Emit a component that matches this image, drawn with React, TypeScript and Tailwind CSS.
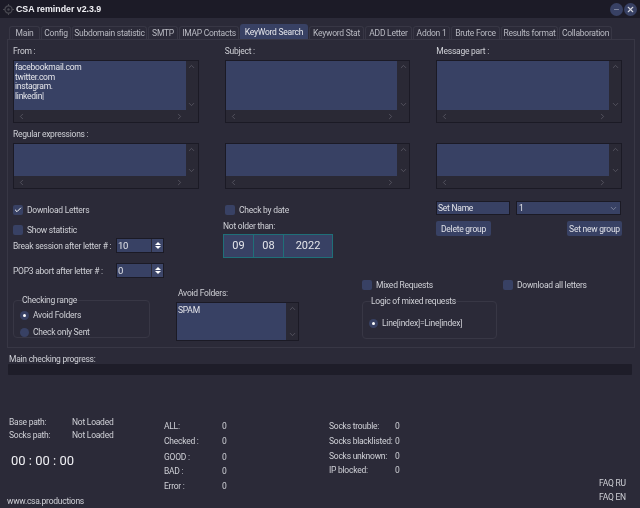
import { ChevronDown, ChevronLeft, ChevronRight, ChevronUp, Check, Minus, X } from "lucide-react";
import type { ReactNode } from "react";

const tabs = [
  { name: "Main", w: "w-[31px]" },
  { name: "Config", w: "w-[30px]" },
  { name: "Subdomain statistic", w: "w-[75px]" },
  { name: "SMTP", w: "w-[30px]" },
  { name: "IMAP Contacts", w: "w-[60px]" },
  { name: "KeyWord Search", w: "w-[68px]", active: true },
  { name: "Keyword Stat", w: "w-[55px]" },
  { name: "ADD Letter", w: "w-[47px]" },
  { name: "Addon 1", w: "w-[37px]" },
  { name: "Brute Force", w: "w-[49px]" },
  { name: "Results format", w: "w-[57px]" },
  { name: "Collaboration", w: "w-[53px]" },
];

function ListBox({ h, lines = [], className = "" }: { h: string; lines?: string[]; className?: string }) {
  return (
    <div className={`flex flex-col border border-[#1b1a25] bg-[#2a2935] ${className}`}>
      <div className="flex">
        <div className={`flex-1 bg-[#384164] px-[1px] pt-[2px] leading-[9.5px] text-[#e4e5ea] ${h}`}>
          {lines.map((l) => (
            <div key={l}>{l}</div>
          ))}
        </div>
        <div className="flex w-[12px] flex-col items-center justify-between py-[1px] text-[#5d5c68]">
          <ChevronUp size={9} strokeWidth={2} />
          <ChevronDown size={9} strokeWidth={2} />
        </div>
      </div>
      <div className="flex h-[12px] items-center justify-between pl-[3px] pr-[14px] text-[#5d5c68]">
        <ChevronLeft size={9} strokeWidth={2} />
        <ChevronRight size={9} strokeWidth={2} />
      </div>
    </div>
  );
}

function CheckRow({ label, checked, className = "" }: { label: string; checked?: boolean; className?: string }) {
  return (
    <div className={`flex items-center gap-[4px] whitespace-nowrap ${className}`}>
      <span className="flex h-[10px] w-[10px] items-center justify-center rounded-[2px] bg-[#384164] text-white">
        {checked && <Check size={8} strokeWidth={3} />}
      </span>
      <span>{label}</span>
    </div>
  );
}

function RadioRow({ label, on, className = "" }: { label: string; on?: boolean; className?: string }) {
  return (
    <div className={`flex items-center gap-[4px] whitespace-nowrap ${className}`}>
      <span className="flex h-[9px] w-[9px] items-center justify-center rounded-full bg-[#384164]">
        {on && <span className="h-[3px] w-[3px] rounded-full bg-white" />}
      </span>
      <span>{label}</span>
    </div>
  );
}

function Spin({ value }: { value: string }) {
  return (
    <div className="flex h-[15px] w-[48px] border border-[#1b1a25] bg-[#384164]">
      <span className="flex-1 pl-[1px] text-[9.5px] leading-[13px] text-[#e4e5ea]">{value}</span>
      <span className="flex w-[12px] flex-col items-center justify-center gap-[1px] border-l border-[#2a2935] bg-[#3d4669]">
        <span className="h-0 w-0 border-x-[3px] border-b-[3px] border-x-transparent border-b-white" />
        <span className="h-0 w-0 border-x-[3px] border-t-[3px] border-x-transparent border-t-white" />
      </span>
    </div>
  );
}

function Group({ title, className = "", children }: { title: string; className?: string; children: ReactNode }) {
  return (
    <fieldset className={`h-[42px] rounded-[4px] border border-[#383745] ${className}`}>
      <legend className="ml-[8px] leading-[9px]">{title}</legend>
      {children}
    </fieldset>
  );
}

function Btn({ children, className = "" }: { children: ReactNode; className?: string }) {
  return (
    <div className={`flex h-[15px] items-center justify-center rounded-[2px] bg-[#384164] whitespace-nowrap text-[#dfe0e6] ${className}`}>
      {children}
    </div>
  );
}

function Stat({ label, value, labelW, className = "" }: { label: string; value: string; labelW: string; className?: string }) {
  return (
    <div className={`flex whitespace-nowrap leading-[10px] ${className}`}>
      <span className={labelW}>{label}</span>
      <span>{value}</span>
    </div>
  );
}

export default function App() {
  return (
    <div className="h-[508px] w-[640px] overflow-hidden bg-[#2b2a38] font-['Roboto',sans-serif] text-[8.5px] leading-[12px] tracking-[-0.25px] text-[#cfd0d6] blur-[0.3px]">
      {/* title bar */}
      <div className="flex h-[18px] items-center bg-[#1c1b27] pl-[3px] pr-[3px]">
        <svg width="11" height="11" viewBox="0 0 11 11" className="text-[#4a4a52]">
          <circle cx="5.5" cy="5.5" r="3.6" fill="none" stroke="currentColor" strokeWidth="1.2" />
          <circle cx="5.5" cy="5.5" r="1.2" fill="currentColor" />
          <path d="M5.5 0v2M5.5 9v2M0 5.5h2M9 5.5h2" stroke="currentColor" strokeWidth="1" />
        </svg>
        <span className="ml-[2px] font-['Liberation_Sans',sans-serif] text-[8.8px] font-bold tracking-normal text-[#f0f0f4]">CSA reminder v2.3.9</span>
        <div className="ml-auto flex gap-[1px]">
          <span className="flex h-[13px] w-[13px] items-center justify-center rounded-full bg-[#384164] text-[#9aa0b4]">
            <Minus size={7} strokeWidth={2.5} />
          </span>
          <span className="flex h-[13px] w-[13px] items-center justify-center rounded-full bg-[#384164] text-[#d5d7de]">
            <X size={9} strokeWidth={3} />
          </span>
        </div>
      </div>

      {/* tabs */}
      <div className="mt-[6px] flex h-[15px] items-end gap-[1px] pl-[9px]">
        {tabs.map((t) => (
          <div
            key={t.name}
            className={`flex shrink-0 items-center justify-center whitespace-nowrap rounded-t-[3px] ${t.w} ${
              t.active
                ? "h-[15px] bg-[#384164] text-[#e6e7ec]"
                : "h-[13px] border border-b-0 border-[#383745] text-[#b9bac2]"
            }`}
          >
            {t.name}
          </div>
        ))}
      </div>

      {/* panel */}
      <div className="ml-[7px] h-[309px] w-[628px] border border-[#383745] pl-[5px]">
        <div className="grid w-[609px] grid-cols-3 gap-x-[26px]">
          <div>
            <div className="h-[20px] pt-[5px]">From :</div>
            <ListBox h="h-[49px]" lines={["facebookmail.com", "twitter.com", "instagram.", "linkedin|"]} />
          </div>
          <div>
            <div className="h-[20px] pt-[5px]">Subject :</div>
            <ListBox h="h-[49px]" />
          </div>
          <div>
            <div className="h-[20px] pt-[5px]">Message part :</div>
            <ListBox h="h-[49px]" />
          </div>
          <div className="col-span-3 h-[20px] pt-[5px]">Regular expressions :</div>
          <ListBox h="h-[32px]" />
          <ListBox h="h-[32px]" />
          <ListBox h="h-[32px]" />
        </div>

        {/* options */}
        <div className="mt-[12px] flex h-[86px]">
          <div className="w-[210px]">
            <CheckRow label="Download Letters" checked className="mt-[3px]" />
            <CheckRow label="Show statistic" className="mt-[8px]" />
            <div className="mt-[2px] flex items-center whitespace-nowrap">
              <span className="w-[103px]">Break session after letter # :</span>
              <Spin value="10" />
            </div>
            <div className="mt-[10px] flex items-center whitespace-nowrap">
              <span className="w-[103px]">POP3 abort after letter # :</span>
              <Spin value="0" />
            </div>
          </div>
          <div className="w-[213px]">
            <CheckRow label="Check by date" className="ml-[2px] mt-[3px]" />
            <div className="mt-[4px]">Not older than:</div>
            <div className="mt-[2px] flex h-[24px] w-[110px] border border-[#1f6f78] bg-[#384164] text-[11px] tracking-normal text-[#e4e5ea]">
              <span className="flex w-[30px] items-center justify-center border-r border-[#1f6f78]">09</span>
              <span className="flex w-[30px] items-center justify-center border-r border-[#1f6f78]">08</span>
              <span className="flex flex-1 items-center justify-center">2022</span>
            </div>
          </div>
          <div className="w-[186px]">
            <div className="flex gap-[6px]">
              <div className="h-[14px] w-[74px] border border-[#1b1a25] bg-[#384164] pl-[1px] leading-[12px] text-[#e4e5ea]">Set Name</div>
              <div className="flex h-[14px] w-[105px] items-center justify-between border border-[#1b1a25] bg-[#384164] pl-[2px] pr-[2px] text-[#e4e5ea]">
                1
                <ChevronDown size={9} className="text-[#8e93a8]" />
              </div>
            </div>
            <div className="mt-[6px] flex justify-between">
              <Btn className="w-[55px]">Delete group</Btn>
              <Btn className="w-[55px]">Set new group</Btn>
            </div>
          </div>
        </div>

        {/* group row */}
        <div className="flex h-[60px]">
          <div className="w-[140px] pt-[9px]">
            <Group title="Checking range" className="w-[137px]">
              <RadioRow label="Avoid Folders" on className="ml-[6px] mt-[4px]" />
              <RadioRow label="Check only Sent" className="ml-[6px] mt-[5px]" />
            </Group>
          </div>
          <div className="ml-[23px] w-[186px]">
            <div className="pl-[2px] pt-[1px] leading-[10px]">Avoid Folders:</div>
            <div className="mt-[4px] flex h-[39px] w-[123px] border border-[#1b1a25] bg-[#2a2935]">
              <div className="flex-1 bg-[#384164] pl-[1px] pt-[1px] text-[#e4e5ea]">SPAM</div>
              <div className="flex w-[12px] flex-col items-center justify-between py-[1px] text-[#5d5c68]">
                <ChevronUp size={9} strokeWidth={2} />
                <ChevronDown size={9} strokeWidth={2} />
              </div>
            </div>
          </div>
          <div className="w-[141px]">
            <CheckRow label="Mixed Requests" className="mt-[-8px]" />
            <Group title="Logic of mixed requests" className="mt-[6px] w-[135px]">
              <RadioRow label="Line[index]=Line[index]" on className="ml-[6px] mt-[11px]" />
            </Group>
          </div>
          <CheckRow label="Download all letters" className="mt-[-7px] h-[10px]" />
        </div>
      </div>

      {/* progress */}
      <div className="ml-[9px] mt-[6px] leading-[10px]">Main checking progress:</div>
      <div className="ml-[8px] h-[11px] w-[624px] rounded-[1px] bg-[#1e1d29]" />

      {/* bottom stats */}
      <div className="mt-[42px] flex h-[90px]">
        <div className="w-[164px] pl-[9px]">
          <Stat label="Base path:" value="Not Loaded" labelW="w-[63px]" />
          <Stat label="Socks path:" value="Not Loaded" labelW="w-[63px]" className="mt-[3px]" />
          <div className="ml-[2px] mt-[13px] text-[13px] leading-[16px] tracking-normal text-[#f0f0f4]">00 : 00 : 00</div>
          <div className="ml-[-2px] mt-[27px] leading-[10px]">www.csa.productions</div>
        </div>
        <div className="w-[165px] pt-[4px]">
          <Stat label="ALL:" value="0" labelW="w-[58px]" />
          <Stat label="Checked :" value="0" labelW="w-[58px]" className="mt-[5px]" />
          <Stat label="GOOD :" value="0" labelW="w-[58px]" className="mt-[6px]" />
          <Stat label="BAD :" value="0" labelW="w-[58px]" className="mt-[4px]" />
          <Stat label="Error :" value="0" labelW="w-[58px]" className="mt-[5px]" />
        </div>
        <div className="w-[270px] pt-[4px]">
          <Stat label="Socks trouble:" value="0" labelW="w-[66px]" />
          <Stat label="Socks blacklisted:" value="0" labelW="w-[66px]" className="mt-[5px]" />
          <Stat label="Socks unknown:" value="0" labelW="w-[66px]" className="mt-[5px]" />
          <Stat label="IP blocked:" value="0" labelW="w-[66px]" className="mt-[4px]" />
        </div>
        <div className="pt-[61px]">
          <div className="leading-[10px]">FAQ RU</div>
          <div className="mt-[4px] leading-[10px]">FAQ EN</div>
        </div>
      </div>
    </div>
  );
}
